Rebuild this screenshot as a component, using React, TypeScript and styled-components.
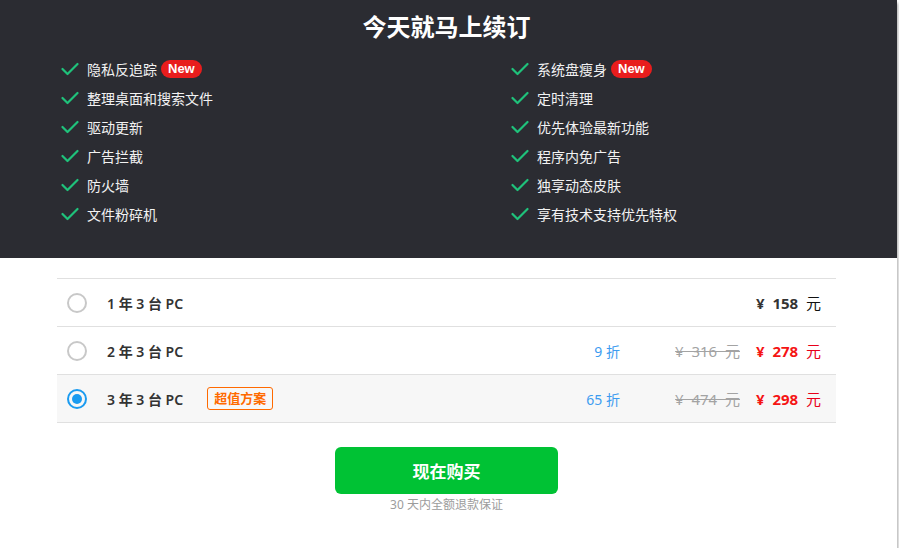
import React from 'react';
import styled, { createGlobalStyle } from 'styled-components';

const GlobalStyle = createGlobalStyle`
  html, body {
    margin: 0;
    padding: 0;
    background: #ffffff;
  }
  body {
    font-family: "Noto Sans", "Noto Sans CJK SC", sans-serif;
  }
`;

interface Plan {
    label: string;
    discount?: string;
    original?: string;
    price: string;
    tag?: string;
    selected?: boolean;
}

const leftFeatures = [
    { text: '隐私反追踪', isNew: true },
    { text: '整理桌面和搜索文件' },
    { text: '驱动更新' },
    { text: '广告拦截' },
    { text: '防火墙' },
    { text: '文件粉碎机' },
];

const rightFeatures = [
    { text: '系统盘瘦身', isNew: true },
    { text: '定时清理' },
    { text: '优先体验最新功能' },
    { text: '程序内免广告' },
    { text: '独享动态皮肤' },
    { text: '享有技术支持优先特权' },
];

const plans: Plan[] = [
    { label: '1 年 3 台 PC', price: '158' },
    { label: '2 年 3 台 PC', discount: '9 折', original: '316', price: '278' },
    {
        label: '3 年 3 台 PC',
        discount: '65 折',
        original: '474',
        price: '298',
        tag: '超值方案',
        selected: true,
    },
];

const Panel = styled.div`
  width: 897px;
  height: 548px;
  background: #ffffff;
  box-shadow: 1px 3px 3px rgba(0, 0, 0, 0.35);
  display: flex;
  flex-direction: column;
`;

const Header = styled.div`
  height: 258px;
  background: #2b2c32;
  padding-top: 12px;
  box-sizing: border-box;
`;

const Title = styled.h1`
  margin: 0;
  width: 893px;
  text-align: center;
  color: #ffffff;
  font-size: 24px;
  line-height: 30px;
  font-weight: 700;
`;

const FeatureGrid = styled.div`
  margin-top: 12px;
  padding-left: 61px;
  display: grid;
  grid-template-columns: 450px 1fr;
`;

const FeatureColumn = styled.ul`
  margin: 0;
  padding: 0;
  list-style: none;
`;

const FeatureItem = styled.li`
  display: flex;
  align-items: center;
  height: 29px;
  color: #f2f2f2;
  font-size: 14px;
`;

const Check = styled.svg`
  width: 18px;
  height: 14px;
  margin-right: 8px;
  flex-shrink: 0;
`;

const NewBadge = styled.span`
  margin-left: 4px;
  height: 18px;
  padding: 0 7px;
  border-radius: 9px;
  background: #e81d1d;
  color: #ffffff;
  font-family: "Liberation Sans", Arial, sans-serif;
  font-size: 13px;
  font-weight: 700;
  line-height: 18px;
`;

const Body = styled.div`
  width: 893px;
  padding-top: 20px;
  display: flex;
  flex-direction: column;
  align-items: center;
`;

const Table = styled.div`
  width: 779px;
  border-top: 1px solid #e0e0e0;
`;

const Row = styled.div<{ $selected?: boolean }>`
  height: 47px;
  border-bottom: 1px solid #e0e0e0;
  background: ${(p) => (p.$selected ? '#f7f7f7' : '#ffffff')};
  display: grid;
  grid-template-columns: 20px 1fr 100px 120px 81px;
  align-items: center;
  padding: 0 15px 0 10px;
  cursor: pointer;
`;

const Radio = styled.span<{ $selected?: boolean }>`
  width: 20px;
  height: 20px;
  box-sizing: border-box;
  border-radius: 50%;
  border: 2px solid ${(p) => (p.$selected ? '#1a9bf0' : '#c8c8c8')};
  display: flex;
  align-items: center;
  justify-content: center;

  &::after {
    content: '';
    width: 10px;
    height: 10px;
    border-radius: 50%;
    background: ${(p) => (p.$selected ? '#1a9bf0' : 'transparent')};
  }
`;

const PlanName = styled.div`
  display: flex;
  align-items: center;
  padding-left: 20px;
  color: #333333;
  font-size: 14px;
  font-weight: 600;
`;

const Tag = styled.span`
  margin-left: 24px;
  height: 23px;
  box-sizing: border-box;
  padding: 0 6px;
  border: 1px solid #ff6a00;
  border-radius: 3px;
  color: #ff6a00;
  font-size: 13px;
  font-weight: 700;
  line-height: 21px;
`;

const Discount = styled.span`
  text-align: right;
  color: #3d9cf0;
  font-size: 14px;
`;

const Original = styled.span`
  text-align: right;
  color: #a3a3a3;
  font-size: 15px;
  text-decoration: line-through;
  white-space: pre;
`;

const Price = styled.span<{ $red?: boolean }>`
  text-align: right;
  color: ${(p) => (p.$red ? '#f51414' : '#333333')};
  font-size: 15px;
  font-weight: 700;
  white-space: pre;

  em {
    font-style: normal;
    font-weight: 400;
    font-size: 15px;
    color: ${(p) => (p.$red ? '#e8001a' : '#111111')};
  }
`;

const BuyButton = styled.button`
  margin-top: 24px;
  width: 223px;
  height: 47px;
  border: none;
  border-radius: 6px;
  background: #00c234;
  color: #ffffff;
  font-family: "Noto Sans", "Noto Sans CJK SC", sans-serif;
  font-size: 17px;
  font-weight: 700;
  cursor: pointer;
`;

const Guarantee = styled.div`
  margin-top: 3px;
  color: #9c9c9c;
  font-size: 12px;
  line-height: 16px;
`;

const CheckIcon = () => (
    <Check viewBox="0 0 18 14">
        <polyline
            points="1.5,7 6.5,12 16.5,2"
            fill="none"
            stroke="#1fc27b"
            strokeWidth="2.2"
            strokeLinecap="round"
            strokeLinejoin="round"
        />
    </Check>
);

const FeatureList = ({ items }: { items: { text: string; isNew?: boolean }[] }) => (
    <FeatureColumn>
        {items.map((f) => (
            <FeatureItem key={f.text}>
                <CheckIcon />
                {f.text}
                {f.isNew && <NewBadge>New</NewBadge>}
            </FeatureItem>
        ))}
    </FeatureColumn>
);

export default function App() {
    return (
        <>
            <GlobalStyle />
            <Panel>
                <Header>
                    <Title>今天就马上续订</Title>
                    <FeatureGrid>
                        <FeatureList items={leftFeatures} />
                        <FeatureList items={rightFeatures} />
                    </FeatureGrid>
                </Header>
                <Body>
                    <Table>
                        {plans.map((p) => (
                            <Row key={p.label} $selected={p.selected}>
                                <Radio $selected={p.selected} />
                                <PlanName>
                                    {p.label}
                                    {p.tag && <Tag>{p.tag}</Tag>}
                                </PlanName>
                                <Discount>{p.discount}</Discount>
                                <Original>
                                    {p.original ? `¥  ${p.original}  元` : ''}
                                </Original>
                                <Price $red={!!p.discount}>
                                    {`¥  ${p.price}  `}
                                    <em>元</em>
                                </Price>
                            </Row>
                        ))}
                    </Table>
                    <BuyButton>现在购买</BuyButton>
                    <Guarantee>30 天内全额退款保证</Guarantee>
                </Body>
            </Panel>
        </>
    );
}
